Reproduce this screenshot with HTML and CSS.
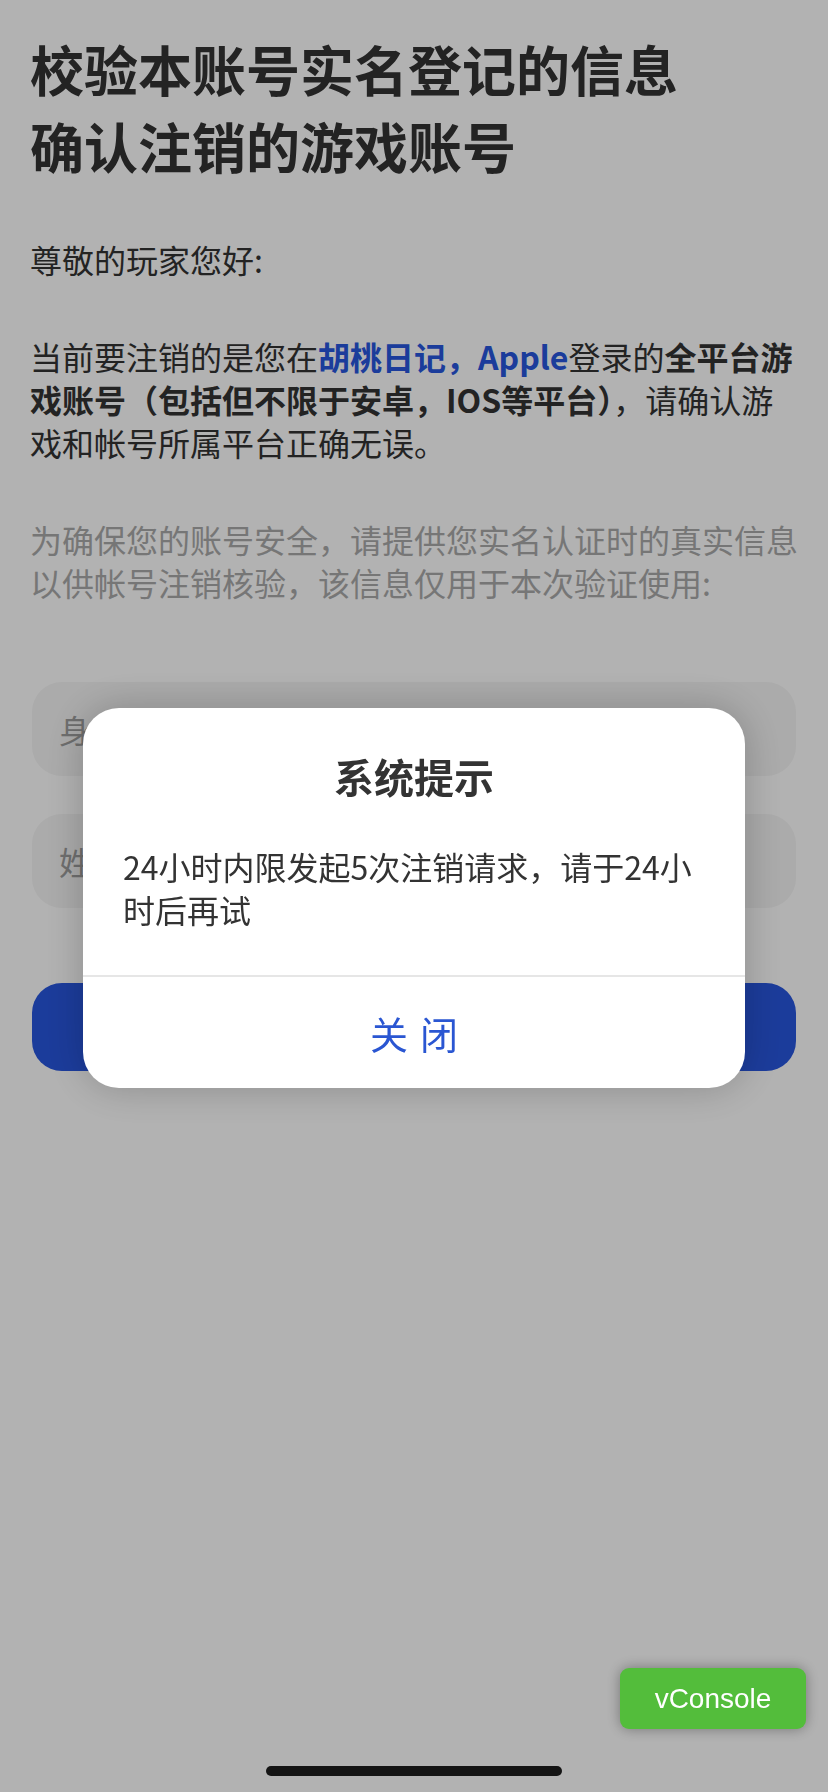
FILE: index.html
```html
<!DOCTYPE HTML>
<html>
<head>
	<meta charset="utf-8">
	<title>注销账号</title>
	<link rel="stylesheet" href="styles.css">
</head>
<body>
	<div class="page">
		<h1 class="titulo">校验本账号实名登记的信息<br>确认注销的游戏账号</h1>
		<p class="texto">尊敬的玩家您好:</p>
		<p class="texto">当前要注销的是您在<b class="azul">胡桃日记，Apple</b>登录的<b>全平台游戏账号（包括但不限于安卓，IOS等平台）</b>，请确认游戏和帐号所属平台正确无误。</p>
		<p class="texto gris">为确保您的账号安全，请提供您实名认证时的真实信息以供帐号注销核验，该信息仅用于本次验证使用:</p>
		<div class="formulario">
			<div class="campo">身份证号码</div>
			<div class="campo">姓名</div>
			<div class="boton">确认注销</div>
		</div>
	</div>

	<div class="mascara"></div>
	<div class="dialogo">
		<div class="dialogo-cuerpo">
			<div class="dialogo-titulo">系统提示</div>
			<div class="dialogo-texto">24小时内限发起5次注销请求，请于24小时后再试</div>
		</div>
		<div class="dialogo-pie">关闭</div>
	</div>

	<div class="vc-switch">vConsole</div>
	<div class="home-bar"></div>
</body>
</html>
```

FILE: styles.css
```css
*, *::after, *::before{
	box-sizing: border-box;
	margin: 0;
	padding: 0;
}
html, body{
	width: 100%;
	height: 100%;
}
body{
	background-color: #fff;
	font-family: "Noto Sans CJK SC", "Noto Sans", sans-serif;
	color: #333;
	overflow: hidden;
}
.page{
	padding: 30px 28px 0 30px;
	min-height: 1792px;
}
.titulo{
	font-size: 54px;
	line-height: 77px;
	font-weight: 700;
	color: #333;
}
.texto{
	font-size: 32px;
	line-height: 43px;
	margin-top: 54px;
}
.texto b{
	font-weight: 700;
}
.azul{
	color: #2856de;
}
.gris{
	color: #aaa;
}
.formulario{
	margin: 78px 0 0 2px;
	width: 764px;
	display: flex;
	flex-direction: column;
}
.campo{
	height: 94px;
	border-radius: 30px;
	background-color: #f5f5f5;
	color: #9e9e9e;
	font-size: 32px;
	line-height: 94px;
	padding-left: 27px;
	margin-bottom: 38px;
}
.campo + .campo{
	margin-bottom: 75px;
}
.boton{
	height: 88px;
	border-radius: 30px;
	background-color: #2856de;
	color: #fff;
	font-size: 34px;
	line-height: 88px;
	text-align: center;
}

/* capa del aviso */
.mascara{
	position: fixed;
	top: 0;
	left: 0;
	right: 0;
	bottom: 0;
	background-color: rgba(0, 0, 0, 0.3);
}
.dialogo{
	position: fixed;
	top: 708px;
	left: 83px;
	width: 662px;
	background-color: #fff;
	border-radius: 36px;
	box-shadow: 0 0 40px rgba(0, 0, 0, 0.22);
	overflow: hidden;
}
.dialogo-cuerpo{
	padding: 40px 40px 44px 40px;
}
.dialogo-titulo{
	font-size: 40px;
	line-height: 56px;
	font-weight: 700;
	text-align: center;
	color: #333;
}
.dialogo-texto{
	margin-top: 41px;
	font-size: 32px;
	line-height: 43px;
	color: #333;
}
.dialogo-pie{
	border-top: 2px solid #e6e6e6;
	height: 113px;
	line-height: 111px;
	text-align: center;
	font-size: 38px;
	letter-spacing: 12px;
	padding-left: 12px;
	color: #2a56d2;
}

.vc-switch{
	position: fixed;
	left: 620px;
	top: 1668px;
	width: 186px;
	height: 61px;
	border-radius: 9px;
	background-color: #53bd3b;
	box-shadow: 0 0 14px rgba(0, 0, 0, 0.35);
	color: #fff;
	font-family: "Liberation Sans", Arial, sans-serif;
	font-size: 28px;
	line-height: 61px;
	text-align: center;
}
.home-bar{
	position: fixed;
	left: 266px;
	top: 1766px;
	width: 296px;
	height: 10px;
	border-radius: 5px;
	background-color: #141414;
}
```
